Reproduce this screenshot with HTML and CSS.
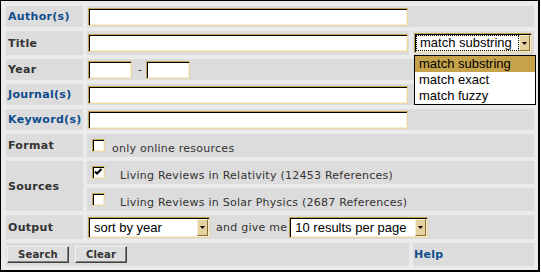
FILE: index.html
```html
<!DOCTYPE html>
<html lang="en">
<head>
<meta charset="UTF-8">
<title>Living Reviews Search</title>
<link rel="stylesheet" href="styles.css">
</head>
<body>
<form class="search-form" onsubmit="return false">
<table class="search">
  <colgroup>
    <col class="col-label">
    <col class="col-field">
    <col class="col-extra">
  </colgroup>
  <tr class="h21">
    <th class="link">Author(s)</th>
    <td colspan="2"><input class="txt" type="text" name="author"></td>
  </tr>
  <tr class="h24">
    <th>Title</th>
    <td><input class="txt" type="text" name="title"></td>
    <td>
      <div class="combo combo-match">
        <span class="combo-val focus">match substring</span>
        <span class="combo-btn"><svg width="5" height="3" viewBox="0 0 5 3"><polygon points="0,0 5,0 2.5,3" fill="#000"/></svg></span>
        <ul class="combo-list">
          <li class="active">match substring</li>
          <li>match exact</li>
          <li>match fuzzy</li>
        </ul>
      </div>
    </td>
  </tr>
  <tr class="h21">
    <th>Year</th>
    <td colspan="2"><input class="txt year" type="text" name="from"><span class="dash">-</span><input class="txt year" type="text" name="to"></td>
  </tr>
  <tr class="h21">
    <th class="link">Journal(s)</th>
    <td colspan="2"><input class="txt" type="text" name="journal"></td>
  </tr>
  <tr class="h21">
    <th class="link">Keyword(s)</th>
    <td colspan="2"><input class="txt" type="text" name="keyword"></td>
  </tr>
  <tr class="h23">
    <th>Format</th>
    <td colspan="2" class="opt">
      <div class="opt-line"><span class="chk"></span><span class="opt-text">only online resources</span></div>
    </td>
  </tr>
  <tr class="h23">
    <th rowspan="2">Sources</th>
    <td colspan="2" class="opt">
      <div class="opt-line">
        <span class="chk"><svg width="11" height="11" viewBox="0 0 11 11"><polyline points="2,4.5 4,6.5 8.5,2" fill="none" stroke="#000" stroke-width="2"/></svg></span>
        <span class="opt-text src">Living Reviews in Relativity (12453 References)</span>
      </div>
    </td>
  </tr>
  <tr class="h23">
    <td colspan="2" class="opt">
      <div class="opt-line"><span class="chk"></span><span class="opt-text src">Living Reviews in Solar Physics (2687 References)</span></div>
    </td>
  </tr>
  <tr class="h24">
    <th>Output</th>
    <td colspan="2">
      <div class="out-line">
        <div class="combo combo-sort">
          <span class="combo-val">sort by year</span>
          <span class="combo-btn"><svg width="5" height="3" viewBox="0 0 5 3"><polygon points="0,0 5,0 2.5,3" fill="#000"/></svg></span>
        </div>
        <span class="and">and give me</span>
        <div class="combo combo-count">
          <span class="combo-val">10 results per page</span>
          <span class="combo-btn"><svg width="5" height="3" viewBox="0 0 5 3"><polygon points="0,0 5,0 2.5,3" fill="#000"/></svg></span>
        </div>
      </div>
    </td>
  </tr>
  <tr class="h23">
    <td colspan="2" class="actions"><button class="btn" type="submit">Search</button><button class="btn" type="reset">Clear</button></td>
    <td><a class="link help" href="#">Help</a></td>
  </tr>
</table>
</form>
</body>
</html>
```

FILE: styles.css
```css
body {
  margin: 0;
  background: #fff;
  color: #333;
  font-family: "DejaVu Sans", Verdana, sans-serif;
  font-size: 11px;
}
.search-form { margin: 0; }

.search {
  width: 540px;
  table-layout: fixed;
  border-collapse: separate;
  border-spacing: 4px;
  padding: 1px 0 0 1px;
  border: solid #000;
  border-width: 1px 2px 2px 1px;
  background: #ebebeb;
}
.col-label { width: 77px; }
.col-field { width: 322px; }
.col-extra { width: 121px; }
.search th,
.search td {
  padding: 0 1px;
  background: #dcdcdc;
  vertical-align: middle;
}
.search th {
  padding-left: 2px;
  text-align: left;
  font-weight: bold;
  letter-spacing: 0.3px;
  white-space: nowrap;
}
.h21 { height: 21px; }
.h23 { height: 23px; }
.h24 { height: 24px; }
.link { color: #0e4d8c; font-weight: bold; letter-spacing: 0.3px; text-decoration: none; }

/* text fields */
.txt {
  box-sizing: border-box;
  width: 320px;
  height: 18px;
  margin: 0;
  padding: 1px 3px;
  border: 1px solid;
  border-color: #c4a24c #e9d8a6 #e9d8a6 #c4a24c;
  box-shadow: inset 1px 1px 0 #000, inset -1px -1px 0 #f5edd6;
  background: #fff;
  font: 11px "DejaVu Sans", sans-serif;
  vertical-align: middle;
}
.txt.year { width: 44px; }
.dash { margin: 0 4px 0 6px; vertical-align: middle; }

/* checkboxes */
.opt { vertical-align: top; padding-top: 1px; }
.opt-line { display: flex; align-items: flex-start; }
.chk {
  box-sizing: border-box;
  width: 13px;
  height: 13px;
  margin: 3px 3px 3px 4px;
  border: 1px solid;
  border-color: #c4a24c #e9d8a6 #e9d8a6 #c4a24c;
  box-shadow: inset 1px 1px 0 #000, inset -1px -1px 0 #f5edd6;
  background: #fff;
}
.chk svg { display: block; }
.opt-text { margin: 6px 0 0 4px; line-height: 13px; letter-spacing: 0.25px; white-space: nowrap; }
.opt-text.src { margin-left: 12px; }

/* drop-downs */
.combo {
  position: relative;
  display: flex;
  box-sizing: border-box;
  height: 20px;
  padding: 1px;
  border: 1px solid;
  border-color: #c4a24c #e9d8a6 #e9d8a6 #c4a24c;
  box-shadow: inset 1px 1px 0 #000, inset -1px -1px 0 #f5edd6;
  background: #fff;
  color: #000;
  font: 13px "Liberation Sans", Arial, sans-serif;
  line-height: 16px;
}
.combo-val { flex: 1; padding-left: 4px; white-space: nowrap; overflow: hidden; }
.focus { outline: 1px dotted #000; outline-offset: -1px; }
.combo-btn {
  display: flex;
  align-items: center;
  justify-content: center;
  box-sizing: border-box;
  width: 11px;
  border: 1px solid;
  border-color: #f7efd9 #8a6f2e #8a6f2e #f7efd9;
  background: #e4d3a0;
}
.combo-btn svg { display: block; }
.combo-match { width: 118px; }
.combo-sort { width: 122px; height: 21px; line-height: 17px; }
.combo-count { width: 139px; height: 21px; line-height: 17px; }

.combo-list {
  position: absolute;
  top: 21px;
  left: -1px;
  z-index: 2;
  box-sizing: border-box;
  width: 122px;
  margin: 0;
  padding: 0;
  list-style: none;
  border: 1px solid #000;
  background: #fff;
}
.combo-list li { height: 16px; line-height: 16px; padding-left: 4px; }
.combo-list .active { background: #c6a34b; }

.out-line { display: flex; align-items: center; }
.and { margin: 0 2px 0 6px; line-height: 13px; letter-spacing: 0.25px; white-space: nowrap; }

/* buttons */
.actions { padding-left: 4px; }
.btn {
  height: 17px;
  margin: 0 6px 0 0;
  padding: 0 10px;
  border: 1px solid;
  border-color: #f2f2f2 #404040 #404040 #f2f2f2;
  box-shadow: inset -1px -1px 0 #808080;
  background: #dedede;
  color: #333;
  font: bold 10px "DejaVu Sans", sans-serif;
  letter-spacing: 0.2px;
  vertical-align: middle;
}
```
